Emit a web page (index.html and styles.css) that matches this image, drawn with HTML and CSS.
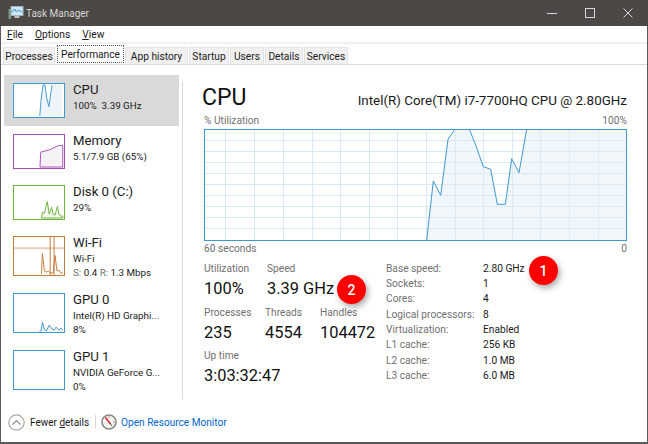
FILE: index.html
```html
<!DOCTYPE html>
<html lang="en">
<head>
<meta charset="utf-8">
<title>Task Manager</title>
<link rel="stylesheet" href="styles.css">
</head>
<body>
<div class="window">
  <header class="titlebar">
    <svg class="appicon" viewBox="0 0 16 16" width="16" height="16"><rect x="3" y="1.5" width="12" height="9" fill="#cfe6f5" stroke="#9fb4c4"/><path d="M4 7l2.5-3 2 3 2-2 3 2" fill="none" stroke="#2f86c5"/><rect x="6.5" y="11" width="5" height="2" fill="#b8c0c6"/><rect x="0.5" y="4" width="2.5" height="10" fill="#7f9a86"/></svg>
    <span class="title">Task Manager</span>
    <div class="controls">
      <svg viewBox="0 0 10 10" width="10" height="10"><path d="M0 5.5h10" stroke="#d8d8d8" fill="none"/></svg>
      <svg viewBox="0 0 10 10" width="10" height="10"><rect x=".5" y=".5" width="9" height="9" stroke="#d8d8d8" fill="none"/></svg>
      <svg viewBox="0 0 10 10" width="10" height="10"><path d="M.5.5l9 9M9.5.5l-9 9" stroke="#d8d8d8" fill="none"/></svg>
    </div>
  </header>
  <nav class="menu">
    <span><u>F</u>ile</span><span><u>O</u>ptions</span><span><u>V</u>iew</span>
  </nav>
  <div class="tabs">
    <span class="tab t1">Processes</span>
    <span class="tab active">Performance</span>
    <span class="tab t3">App history</span>
    <span class="tab t4">Startup</span>
    <span class="tab t5">Users</span>
    <span class="tab t6">Details</span>
    <span class="tab t7">Services</span>
  </div>
  <div class="content">
    <aside class="sidebar">
      <div class="item selected">
        <svg class="thumb cpu" viewBox="0 0 51 35"><path d="M26.3 34L27.7 17 29.7 1 31.7 1 33.5 14 36 24 39.3 1H50V34Z" fill="#eef5fa"/><path d="M26.3 34L27.7 17 29.7 1 31.7 1 33.5 14 36 24 39.3 1" fill="none" stroke="#3f98cf"/></svg>
        <div class="info"><div class="name">CPU</div><div class="sub">100%&nbsp; 3.39 GHz</div></div>
      </div>
      <div class="item">
        <svg class="thumb mem" viewBox="0 0 51 34"><path d="M26.5 33L27.3 17.7 37 15 45.3 11 50 10.7V33Z" fill="#f4f2f5" stroke="#a94fbb"/></svg>
        <div class="info"><div class="name">Memory</div><div class="sub">5.1/7.9 GB (65%)</div></div>
      </div>
      <div class="item">
        <svg class="thumb disk" viewBox="0 0 51 34"><path d="M28 33L29 27 31 28 34 16 36 29 38.5 22 40 29 42 30 44.5 21 46 29 48 31 50 31V33Z" fill="#f1f7ec" stroke="#6db33f"/></svg>
        <div class="info"><div class="name">Disk 0 (C:)</div><div class="sub">29%</div></div>
      </div>
      <div class="item tall">
        <svg class="thumb wifi" viewBox="0 0 51 39"><path d="M0 11.5h51" stroke="#e8cfb8" stroke-width="2" fill="none"/><path d="M37 0V39M41 0V39" stroke="#c47a3a" fill="none"/><path d="M28 38L29 17 31 35 33 36 35 35 37 37 40 37 42 19 44 35 46 34 48 37 50 37" fill="none" stroke="#c47a3a"/></svg>
        <div class="info"><div class="name">Wi-Fi</div><div class="sub">Wi-Fi</div><div class="sub"><span class="dim">S:</span> 0.4 <span class="dim">R:</span> 1.3 Mbps</div></div>
      </div>
      <div class="item tall">
        <svg class="thumb gpu" viewBox="0 0 51 39"><path d="M26 38L27.5 38 29 29 31 36 33 38 36 32 39 36 41 37 43 34 46 37 48 35 50 37" fill="#eef5fa" stroke="#3f98cf"/></svg>
        <div class="info"><div class="name">GPU 0</div><div class="sub">Intel(R) HD Graphi...</div><div class="sub">8%</div></div>
      </div>
      <div class="item tall">
        <svg class="thumb gpu" viewBox="0 0 51 39"></svg>
        <div class="info"><div class="name">GPU 1</div><div class="sub">NVIDIA GeForce G...</div><div class="sub">0%</div></div>
      </div>
    </aside>
    <main class="main">
      <div class="head"><h1>CPU</h1><div class="model">Intel(R) Core(TM) i7-7700HQ CPU @ 2.80GHz</div></div>
      <div class="axis top"><span>% Utilization</span><span>100%</span></div>
      <svg class="graph" viewBox="0 0 423 112" width="423" height="112">
        <path class="gf" d="M222.7 111L229.3 52 236.7 66.3 244 10.3 251 0H265.3L272 17 279.3 37.7 286.7 40.3 293.3 75.3 301.3 75.3 307.7 29.7 315 43.7 322.7 0H423V111Z"/>
        <path class="gl" d="M0 11.5h423M0 22.5h423M0 33.5h423M0 44.5h423M0 55.5h423M0 66.5h423M0 77.5h423M0 88.5h423M0 99.5h423M21.5 0v112M50.5 0v112M79.5 0v112M108.5 0v112M136.5 0v112M165.5 0v112M193.5 0v112M222.5 0v112M251.5 0v112M279.5 0v112M308.5 0v112M336.5 0v112M365.5 0v112M394.5 0v112"/>
        <path class="ln" d="M222.7 111L229.3 52 236.7 66.3 244 10.3 251 0M265.3 0L272 17 279.3 37.7 286.7 40.3 293.3 75.3 301.3 75.3 307.7 29.7 315 43.7 322.7 0"/>
        <rect class="bd" x=".5" y=".5" width="422" height="111"/>
      </svg>
      <div class="axis bottom"><span>60 seconds</span><span>0</span></div>
      <div class="details">
        <div class="stats">
          <div class="row">
            <div class="stat s0"><label>Utilization</label><b>100%</b></div>
            <div class="stat"><label>Speed</label><b>3.39 GHz</b></div>
          </div>
          <div class="row">
            <div class="stat s1"><label>Processes</label><b>235</b></div>
            <div class="stat s2"><label>Threads</label><b>4554</b></div>
            <div class="stat"><label>Handles</label><b>104472</b></div>
          </div>
          <div class="row">
            <div class="stat"><label>Up time</label><b>3:03:32:47</b></div>
          </div>
        </div>
        <dl class="specs">
          <dt>Base speed:</dt><dd>2.80 GHz</dd>
          <dt>Sockets:</dt><dd>1</dd>
          <dt>Cores:</dt><dd>4</dd>
          <dt>Logical processors:</dt><dd>8</dd>
          <dt>Virtualization:</dt><dd>Enabled</dd>
          <dt>L1 cache:</dt><dd>256 KB</dd>
          <dt>L2 cache:</dt><dd>1.0 MB</dd>
          <dt>L3 cache:</dt><dd>6.0 MB</dd>
        </dl>
        <span class="badge b2">2</span>
        <span class="badge b1">1</span>
      </div>
    </main>
  </div>
  <footer class="footer">
    <svg viewBox="0 0 17 17" width="17" height="17"><circle cx="8.5" cy="8.5" r="7.7" fill="#fff" stroke="#a8a8a8" stroke-width="1.2"/><path d="M4.5 10.5l4-4 4 4" fill="none" stroke="#8c8c8c" stroke-width="1.2"/></svg>
    <span class="fewer">Fewer <u>d</u>etails</span>
    <span class="sep"></span>
    <svg viewBox="0 0 16 16" width="16" height="16"><circle cx="8" cy="8" r="7" fill="#f4f4f4" stroke="#8a8a80" stroke-width="1.6"/><path d="M4.5 3.5L9.5 10" stroke="#d8232a" stroke-width="1.5"/><path d="M9 9l2 3" stroke="#555"/><path d="M8 2.5v1.5M13.5 8H12" stroke="#888"/></svg>
    <a class="link">Open Resource Monitor</a>
  </footer>
</div>
</body>
</html>
```
FILE: styles.css
```css
* { box-sizing: border-box; }
html, body { margin: 0; padding: 0; }
body { width: 648px; height: 444px; overflow: hidden; background: #fff; font-family: Roboto, "Noto Sans", sans-serif; font-size: 10.2px; color: #1a1a1a; }
.window { width: 648px; height: 444px; border: solid #5b5b5b; border-width: 0 1px 2px 1px; display: flex; flex-direction: column; }
.titlebar { height: 26px; margin: 0 -1px; background: #4b4845; display: flex; align-items: center; padding-left: 8px; color: #d6d6d6; flex: none; }
.appicon { flex: none; }
.title { margin-left: 2px; font-size: 10px; }
.controls { margin-left: auto; display: flex; align-items: center; gap: 28px; padding-right: 15px; }
.controls svg { display: block; }
.menu { height: 16px; flex: none; display: flex; align-items: center; padding-left: 6px; gap: 12px; }
.tabs { height: 23px; flex: none; border-top: 2px solid #f0f0f0; border-bottom: 1px solid #d9d9d9; display: flex; align-items: flex-end; padding-left: 2px; }
.tab { height: 17px; background: #f0f0f0; border: 1px solid #e3e3e3; border-bottom: 0; display: flex; align-items: center; justify-content: center; margin-right: 1px; white-space: nowrap; }
.t1 { width: 52px; }
.active { width: 67px; height: 18px; margin: 0 1px 1px 1px; background: #fff; border: 1px dotted #555; }
.t3 { width: 63px; }
.t4 { width: 40px; }
.t5 { width: 34px; }
.t6 { width: 38px; }
.t7 { width: 44px; }
.content { flex: 1; display: flex; min-height: 0; }
.sidebar { width: 181px; flex: none; padding: 10px 3px 0 3px; }
.item { height: 51px; display: flex; padding: 8px 0 0 9px; gap: 8px; }
.item.tall { height: 57px; }
.selected { background: #d9d9d9; }
.thumb { width: 52px; height: 35px; flex: none; background: #fff; border: 1px solid #3f98cf; }
.tall .thumb { height: 40px; }
.mem { border-color: #a94fbb; }
.disk { border-color: #6db33f; }
.wifi { border-color: #c47a3a; }
.info { margin-top: -2px; white-space: nowrap; }
.name { font-size: 13.2px; line-height: 18px; }
.sub { font-size: 9.8px; line-height: 14px; }
.dim { color: #707070; }
.main { flex: 1; margin-top: 17px; margin-bottom: 7px; border-left: 1px solid #d9d9d9; padding: 0 20px 0 21px; }
.head { display: flex; justify-content: space-between; align-items: baseline; margin-top: -8px; height: 40px; padding-top: 8px; }
h1 { margin: 0 0 0 -2px; font-size: 23px; font-weight: 400; line-height: 32px; color: #111; }
.model { font-size: 13.4px; }
.axis { display: flex; justify-content: space-between; color: #707070; line-height: 14px; }
.axis.top { margin-bottom: 1px; }
.graph { display: block; }
.gf { fill: #f1f6fa; }
.gl { stroke: #d9eaf4; fill: none; }
.ln { stroke: #3f98cf; fill: none; }
.bd { stroke: #3f98cf; fill: none; }
.axis.bottom { margin-top: 1px; }
.details { display: flex; margin-top: 6px; position: relative; }
.stats { width: 182px; flex: none; }
.row { display: flex; height: 43.5px; }
.stat { display: flex; flex-direction: column; }
.s0 { width: 63px; }
.s1 { width: 61px; }
.s2 { width: 55px; }
.stat label { line-height: 14px; color: #707070; }
.stat b { font-weight: 400; font-size: 16.4px; line-height: 24px; margin-top: 1px; color: #111; }
.specs { margin: -1.5px 0 0; display: grid; grid-template-columns: 97px auto; grid-auto-rows: 15.4px; flex: 1; line-height: 15px; white-space: nowrap; }
.specs dt { color: #707070; }
.specs dd { margin: 0; }
.badge { position: absolute; width: 29px; height: 29px; border-radius: 50%; background: #f00; color: #fff; font-size: 14px; font-weight: 500; display: flex; align-items: center; justify-content: center; box-shadow: 2px 3px 6px rgba(0,0,0,.35); }
.b2 { left: 133px; top: 13px; }
.b1 { left: 325px; top: -6px; }
.footer { height: 36px; flex: none; display: flex; align-items: center; padding: 0 0 4px 7px; }
.fewer { margin-left: 5px; font-size: 10px; }
.sep { width: 1px; height: 14px; background: #d9d9d9; margin: 0 5px 0 6px; }
.link { margin-left: 4px; color: #0066cc; font-size: 10.1px; }
```
